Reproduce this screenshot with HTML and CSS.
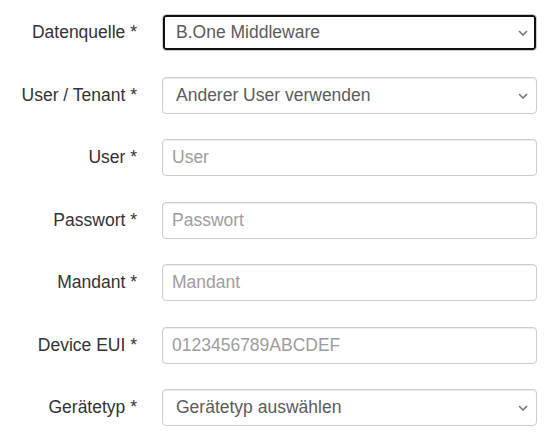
FILE: index.html
```html
<!DOCTYPE html>
<html lang="de">
<head>
<meta charset="utf-8">
<link rel="stylesheet" href="styles.css">
</head>
<body>
<form class="form">
  <div class="row">
    <label class="label">Datenquelle *</label>
    <div class="control select focused">
      <span class="value">B.One Middleware</span>
      <svg class="chev" width="10" height="6" viewBox="0 0 10 6"><path d="M1 1 L5 5 L9 1" fill="none" stroke="#777" stroke-width="1.6"/></svg>
    </div>
  </div>
  <div class="row">
    <label class="label">User / Tenant *</label>
    <div class="control select">
      <span class="value">Anderer User verwenden</span>
      <svg class="chev" width="10" height="6" viewBox="0 0 10 6"><path d="M1 1 L5 5 L9 1" fill="none" stroke="#777" stroke-width="1.6"/></svg>
    </div>
  </div>
  <div class="row">
    <label class="label">User *</label>
    <input class="control input" type="text" placeholder="User">
  </div>
  <div class="row">
    <label class="label">Passwort *</label>
    <input class="control input" type="text" placeholder="Passwort">
  </div>
  <div class="row">
    <label class="label">Mandant *</label>
    <input class="control input" type="text" placeholder="Mandant">
  </div>
  <div class="row">
    <label class="label">Device EUI *</label>
    <input class="control input" type="text" placeholder="0123456789ABCDEF">
  </div>
  <div class="row">
    <label class="label">Gerätetyp *</label>
    <div class="control select">
      <span class="value">Gerätetyp auswählen</span>
      <svg class="chev" width="10" height="6" viewBox="0 0 10 6"><path d="M1 1 L5 5 L9 1" fill="none" stroke="#777" stroke-width="1.6"/></svg>
    </div>
  </div>
</form>
</body>
</html>
```
FILE: styles.css
```css
html, body {
  margin: 0;
  padding: 0;
  background: #fff;
}
body {
  font-family: "Liberation Sans", Arial, sans-serif;
  font-size: 17.5px;
  color: #333;
}
.form {
  padding-top: 14px;
  display: flex;
  flex-direction: column;
  gap: 25.5px;
}
.row {
  display: grid;
  grid-template-columns: 137px 375px;
  column-gap: 25px;
  align-items: center;
}
.label {
  text-align: right;
  color: #333;
}
.control {
  box-sizing: border-box;
  height: 37px;
  width: 375px;
  border: 1px solid #ccc;
  border-radius: 4px;
  box-shadow: inset 0 1px 1px rgba(0,0,0,0.075);
  background: #fff;
  font-family: inherit;
  font-size: 17.5px;
  margin: 0;
}
.select {
  display: flex;
  align-items: center;
  justify-content: space-between;
  padding: 0 8px 0 13px;
  color: #5c5c5c;
}
.focused {
  box-shadow: inset 0 0 0 2px #111;
}
.input {
  padding: 0 9px;
  color: #555;
  outline: none;
}
.input::placeholder {
  color: #9d9d9d;
}
.chev {
  display: block;
  margin-top: 1px;
}
```
